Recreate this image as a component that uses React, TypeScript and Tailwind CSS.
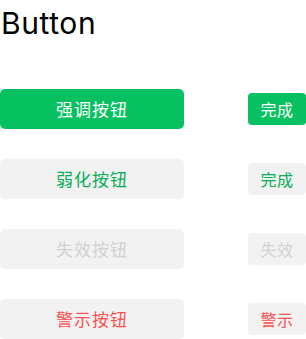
export default function App() {
  const rows = [
    { big: "强调按钮", small: "完成", cls: "bg-[#07c160] text-white" },
    { big: "弱化按钮", small: "完成", cls: "bg-[#f2f2f2] text-[#06ae56]" },
    { big: "失效按钮", small: "失效", cls: "bg-[#f2f2f2] text-[#d1d1d1]" },
    { big: "警示按钮", small: "警示", cls: "bg-[#f2f2f2] text-[#fa5151]" },
  ];
  return (
    <div className="w-[306px] h-[339px] bg-white overflow-hidden" style={{ fontFamily: '"Inter", "Noto Sans CJK SC", sans-serif' }}>
      <h1 className="pl-[1px] pt-[3px] h-[89px] text-[30px] leading-[40px] tracking-[0.6px] text-black font-normal">Button</h1>
      <div className="flex flex-col gap-[30px]">
        {rows.map((r, i) => (
          <div key={i} className="flex items-center justify-between h-[40px]">
            <div className={`w-[184px] h-[40px] rounded-[5px] flex items-center justify-center text-[17px] font-normal tracking-[1px] ${r.cls}`} style={{ fontFamily: '"Noto Sans CJK SC", sans-serif' }}>
              {r.big}
            </div>
            <div className={`w-[58px] h-[32px] rounded-[4px] flex items-center justify-center text-[16px] tracking-[0.5px] font-normal ${r.cls}`} style={{ fontFamily: '"Noto Sans CJK SC", sans-serif' }}>
              {r.small}
            </div>
          </div>
        ))}
      </div>
    </div>
  );
}
